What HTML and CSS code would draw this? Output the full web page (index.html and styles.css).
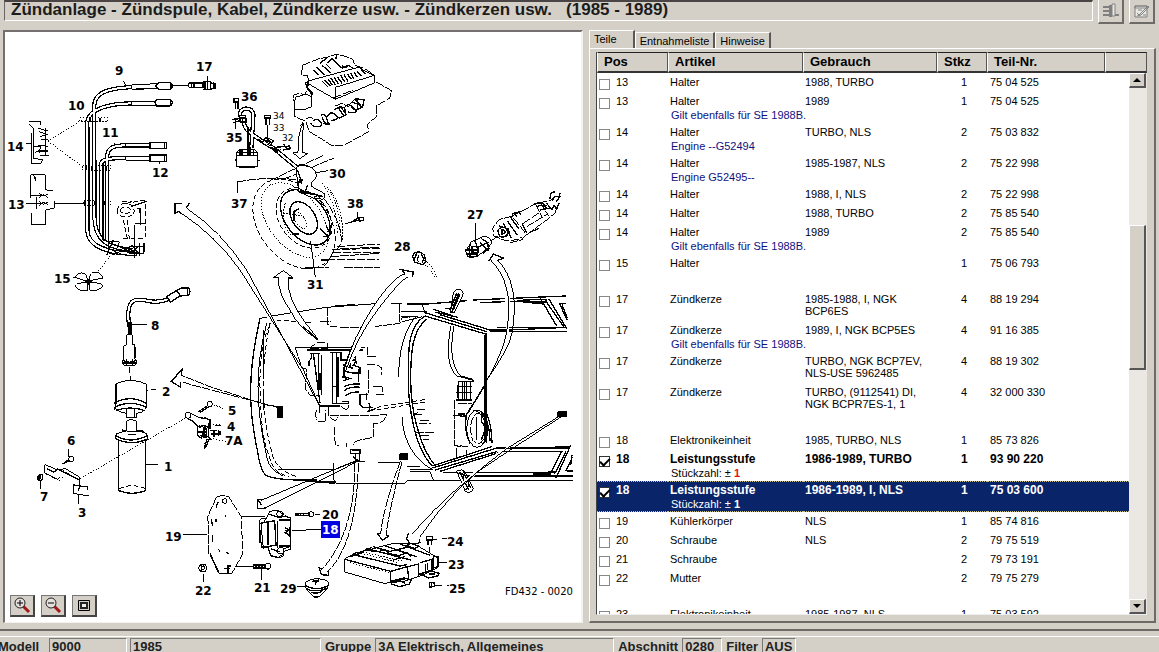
FILE: index.html
```
<!DOCTYPE html>
<html lang="de">
<head>
<meta charset="utf-8">
<title>Zündanlage</title>
<link rel="stylesheet" href="styles.css">
</head>
<body>
<div class="app">
  <header class="toolbar">
    <h1 class="title">Zündanlage - Zündspule, Kabel, Zündkerze usw. - Zündkerzen usw.&nbsp;&nbsp; (1985 - 1989)</h1>
    <button class="tool" aria-label="Export">
      <svg width="18" height="16" viewBox="0 0 18 16"><path d="M1 4h7M1 8h7M1 12h7M13 12h4" stroke="#808080" stroke-width="2"/><path d="M7 2h3v12H7z" fill="#808080"/><path d="M10 1h3v12h-3z" fill="#e8e8e4" stroke="#808080"/></svg>
    </button>
    <button class="tool" aria-label="Notiz">
      <svg width="16" height="16" viewBox="0 0 16 16"><path d="M1 3h12v11H1z" fill="#e8e8e4" stroke="#808080"/><path d="M1 3h12v2H1zM4 7h4M3 10l2 2 9-9 1 1-8 8-4 1M9 12h3" fill="none" stroke="#808080"/></svg>
    </button>
  </header>

  <main class="work">
    <section class="diagram">
      <svg class="drawing" viewBox="5 32 576 590" preserveAspectRatio="xMidYMid meet" role="img" aria-label="Explosionszeichnung">
        <!-- Ignition cables 9-12 with brackets 13-15 -->
        <g class="ink" transform="scale(.33333)">
          <g class="cable-o"><path d="M283 660V315C284 272 340 264 400 261"/><path d="M262 690V365C268 325 330 311 395 310"/><path d="M321 720V470C323 440 345 436 380 436"/><path d="M303 700V495C303 475 330 474 380 475"/><path d="M262 690C264 745 330 760 410 762"/><path d="M283 650C285 720 320 745 400 750"/></g>
          <g class="cable-i"><path d="M283 660V315C284 272 340 264 400 261"/><path d="M262 690V365C268 325 330 311 395 310"/><path d="M321 720V470C323 440 345 436 380 436"/><path d="M303 700V495C303 475 330 474 380 475"/><path d="M262 690C264 745 330 760 410 762"/><path d="M283 650C285 720 320 745 400 750"/></g>
          <path class="b" d="M268 380V690M290 480V650M309 490V720M325 500V730"/>
          <path fill="#fff" d="M395 255l75-4v14l-75 3zM395 304h75v13h-75zM378 430h70v11h-70zM378 470h70v11h-70z"/>
          <path class="b" d="M395 268l75-3M395 317h75M378 441h70M378 481h70"/>
          <path class="b" fill="#fff" d="M475 248h35q7 4 7 10t-7 10h-35l-8-10zM470 298h40q7 4 7 10t-7 10h-40l-5-10zM450 427h49v18h-49zM450 465h49v19h-49z"/>
          <path class="b" d="M512 250v16M512 300v16M494 428v16M494 466v17"/>
          <path d="M518 257h45M370 242l8 15M345 428v10M478 485v8M622 228v20"/>
          <path class="b" d="M563 257l6-8h40v14h-40zM575 250v12M582 250v12M609 244h22v24h-22M615 244v24M622 244v24M631 248l14 4v12l-14 4M640 246v20"/>
          <path class="d1" d="M240 353h84v11h-84zM248 498h84v13h-84zM252 602h80v14h-80zM143 423L245 360M143 423L248 500"/>
          <path class="b" d="M270 353v11M300 353v11M258 498v13M275 498v13M318 498v13M255 602v14M285 602v14M315 602v14"/>
          <path d="M78 430h16M94 400v90h30l4-12-28-2M88 366h34v10M88 372l12 12v90M100 440h24l-8 12h28M115 385l28 8M118 395l22 8M120 410l24-8M124 420h20M115 435l28 4M118 455h26M120 466h26M104 460l10-8 8 8M136 384v80"/>
          <path d="M78 610h45M92 524h44v45l24 4M92 524v70M92 586h30M95 640v34M100 524l8 20v-14M110 592v34M118 580l12 8 14-6M118 592l12-8 14 8M118 604l12 10 14-8M118 616l12-10 14 8M95 674h42v-44l26-6v-20M163 610h89"/>
          <path d="M330 768L292 818" class="d1"/>
          <path fill="#fff" d="M262 836C258 812 232 816 226 832l34 12zM268 842C266 812 300 806 308 834zM262 848c-30 0-38 6-34 14q10 12 34 10zM270 848c35 0 42 6 34 16q-14 12-34 6z"/>
          <path class="b" d="M256 846h20M264 838v16"/><path d="M219 832h10"/>
          <path class="d2" d="M352 630q4-20 25-20t25 20-25 20-25-20M362 630q4-10 15-10t14 10-14 10-15-10M378 610l60-10M367 606h30M370 660l12 55M382 660l6 56M436 612v100M405 670h32M370 716h66"/>
          <path class="b" d="M392 620l48-16M412 625h8l2 50M408 670h24M403 675v100M340 720l-20 45M345 735l60 18M350 748l60 14M388 740h42v20h-42zM418 728v40M395 735l20 25M414 738l-20 22M432 730v26"/>
          <path d="M326 725h32l-14 40-18-6zM305 718l80 34M300 735l70 30"/>
        </g>
        <!-- Coil cable 8, cap 2 -->
        <g class="ink" transform="translate(0 180) scale(.33333)">
          <path class="cable-o" d="M388 440C374 350 410 355 440 362S490 365 510 355"/><path class="cable-i" d="M388 440C374 350 410 355 440 362S490 365 510 355"/>
          <path fill="#fff" class="b" d="M500 350l32-20 12-6h22l4 10-4 12-26 2-28 18z"/><path class="b" d="M562 325v20M530 332l12 16"/>
          <path class="b" d="M390 425v38M395 425v38M386 425v38"/><path d="M392 434h48"/>
          <path fill="#fff" d="M380 464h17v30h7v42l8 14-10 6H372l-6-10 6-10v-38l8-4z"/>
          <path class="b" d="M397 466v26M405 500v35M368 540q20 14 42 0M368 549h42M380 536v18M398 536v18"/><path d="M388 560v18M391 588v16M437 631h8M452 630h16"/>
          <path fill="#fff" d="M347 612q44-22 92 0v68q-4 18-30 20v14h-28v-14q-28-2-36-18l3-14z"/>
          <path class="b" d="M348 612v52M439 614v54M343 670q46-28 97 0M343 682q46-24 97 0M347 692q44-16 88 0M380 684v30M404 684v30M348 670l-4 20"/>
        </g>
        <!-- Coil 1, brackets 3-7, heat sink 19, power stage 18 -->
        <g class="ink" transform="translate(0 370) scale(.33333)">
          <path fill="#fff" d="M379 182v-28q14-10 31 0v28l30 8 4 18-8 4v150q-40 16-79 0V212l-10-6 2-14z"/>
          <path class="b" d="M346 196q46 28 97 0M347 206q48 24 97 0M366 180l12 6M436 220v140M410 184q12-8 22 4M380 184h30M385 194h24"/>
          <path class="d2" d="M358 356q38-18 78 0"/><path class="b" d="M357 362q38 16 80 0M438 284h36"/>
          <path class="d1" d="M240 326L560 142M660 165h-20M670 115l-32-12M678 214l-40-8"/>
          <path d="M663 167h-18M206 238v22M122 330v26M237 376v26M550 493h72M725 439h65M690 591h70M784 598v32M610 612v24M876 482h24"/>
          <circle cx="564" cy="136" r="9"/><circle cx="629" cy="102" r="8"/>
          <path class="b" d="M594 126l30-20M600 128l26-18M572 130l24 12q12 4 20 2l14 6v24l-18-8-14 6-20-18-16-8M600 166l-8 6v24l12 8 10-30M604 166q20 0 14 30l18 14M592 186h26M600 196l20 6M612 172v32M626 158v46M630 182h20M634 192h26v-10M642 180v20M656 180v18M622 206l-10 30M618 218l-6 4M628 206l-12 28"/>
          <circle cx="214" cy="267" r="8"/><path d="M134 284v24l24 12 14 8 8-6M134 284l16 6 20 10 26-4 44 26v26l-20-4v26l46 8M264 360v-12l-24 2" /><path class="b" d="M188 282l20-10M196 274l10-4M140 296l20 10 14-8M238 326v22M218 346h24l-8 16M172 296l66 34"/><path class="d1" d="M138 312l40 20 14-12"/>
          <path class="b" d="M114 318q6-8 14-2v12q-8 6-14 0zM120 316v12"/>
          <path fill="#fff" class="d3" d="M650 380l22-4 14 4 38 60 2 55 3 56-34 60h-34l-34-60V495l-4-55z"/>
          <circle cx="674" cy="393" r="7"/><path class="b" d="M634 448l4 20M638 494v22M648 446v10M656 538l4 8M680 545l6 8M654 396l-6 16M674 438h5M630 550l26 60M684 586v26M672 596h18M682 588h10"/>
          <path fill="#fff" d="M806 444l10-22q14-4 30 4l8 10 18 10v92l-20 6-2 14-14 6-24-6-8-24-20-6-6-72 4-10z"/>
          <path class="b" d="M784 462l40-6 2 72-36 6M804 460v66M834 454v78M838 456l30-2M838 530l30 2M872 450v80M778 462v24h8M780 490v30M812 430l24 8 12-6M836 444h18M810 540l30 8M852 478l14 8-10 8 10 6M866 476v26M854 486h14"/><circle cx="842" cy="545" r="9"/><circle cx="840" cy="433" r="9"/>
          <circle cx="608" cy="594" r="12"/><circle cx="608" cy="594" r="5"/><path class="b" d="M596 590l12-6 8 8M600 600l8 4"/>
          <path class="b" d="M760 585h34v10h-34zM768 585v10M776 585v10M784 585v10"/><circle cx="803" cy="589" r="9"/>
          <path class="d1" d="M190 300L230 326"/>
        </g>
        <!-- Engine, hub assembly, sensors -->
        <g class="ink" transform="translate(220 30) scale(.33333)">
          <path fill="#fff" class="d3" d="M247 106l50-20 32-6 20-8 22 6 26 8 8 20 26 8 34 22v18l50 28-6 22-40 24 2 30-30 26 6 20-24 14-56 30-30 0-30-20-40-24-10-30-32-14-4-64 14-6 20 4 12-36-4-20-18-4z"/>
          <path d="M260 154L415 112l50 26v20L346 208 256 156M346 208v-36l118-36M262 156v20l14 20v32M222 240l4-38 34-10 14 8v30l-24 10z"/>
          <path class="b" d="M256 156l4 16 16 16-2 30M305 152l20 20M314 150l18 18M324 148l14 18M332 144l14 20M342 142l14 20M352 140l14 20M362 136l12 20M372 134l12 20M382 132l12 16M392 130l10 16M402 126l10 16M412 124l12 14M422 118l16 14M280 120l16 14M290 112l24 22M306 106l28 24M318 102l14 14"/>
          <path class="b" d="M320 100l16-14 30 28 20-8 14 10M350 72l-2 14M366 106q6 12 18 2M300 100l20-16"/>
          <path class="d3" d="M258 268q10-12 22 0M346 228l18-8 24 12M250 276l-8 12M340 204l60-24"/>
          <path class="b" d="M280 272q14-10 22 4t-10 14-20-12M302 256q14-8 18 8t8 18-18-2M320 262q10-20 24-10t8 14-20 6M342 240l18-10 14 4 4 20-20 10-18-14M374 232q10-16 28 2t-18 12M390 222l16-16 26 4-4 22-22 8-12-8M404 206l20 24M412 204v30M356 234l14 22M362 230l14 20M306 262l12 22M392 216l30 8"/>
          <path fill="#fff" d="M252 278q-6 30-4 90l16 2-24 16-22-18 16-2q-2-60 18-88z"/>
          <path class="b" d="M42 206h14v10H42zM46 216v20M54 216v20M134 256h18v8h-18zM138 264v20M148 264v20M36 268l24-2M40 278l20-6"/><path d="M48 270v26M143 284v44M52 490v-34M288 428l36-6M412 546v18M766 578v54M374 582l20-6"/>
          <path class="cable-o" d="M62 260C50 230 105 225 100 260L94 354M74 262C60 300 110 320 124 332L160 354 235 416"/>
          <path class="cable-i" d="M62 260C50 230 105 225 100 260L94 354M74 262C60 300 110 320 124 332L160 354 235 416"/>
          <path class="b" d="M56 256h20l4 20H62zM58 264h20M84 290v64M116 326l10 12 12-16 14 14-10 8M140 322l20 10-10 16M134 330l24 8M152 350l22 20M168 352l40-4 4 8-24 4M190 342l14 18M160 348l12 16 12-6"/>
          <path fill="#fff" d="M50 368l8-10h46l8 10v42q-30 8-62 0z"/><path class="b" d="M52 368h58M48 376h66M60 358v18M66 358v18M84 352v24M90 352v24M100 356v20M50 410h60M44 390h6M112 392h8M56 410h44"/>
          <path class="d3" d="M52 456Q140 438 238 450M150 452L310 376M190 448L342 384M238 450q80 40 112 120t-10 92q-10 30-30 48"/>
          <ellipse class="d2" cx="222" cy="582" rx="104" ry="150" transform="rotate(-38 222 582)"/>
          <ellipse class="d1" cx="224" cy="570" rx="78" ry="128" transform="rotate(-38 224 570)"/>
          <ellipse class="b" cx="256" cy="562" rx="60" ry="94" transform="rotate(-38 256 562)"/>
          <ellipse class="d2" cx="252" cy="564" rx="72" ry="100" transform="rotate(-38 252 564)"/>
          <ellipse class="b" cx="251" cy="564" rx="34" ry="54" transform="rotate(-34 251 564)"/>
          <ellipse class="d1" cx="240" cy="570" rx="14" ry="30" transform="rotate(-34 240 570)"/>
          <path class="d1" d="M190 550l60 8M196 520q-20 60 20 100M306 460q44 60 46 150M320 470q44 60 40 150M330 480q44 60 36 150"/>
          <path class="b" d="M300 596l24 24M310 620h18M216 612h22M318 588l14 24M236 536l-14 8v30"/>
          <path fill="#fff" d="M228 412q20-12 40-2 24 10 20 34l-12 12v14l36 20q6 12-2 18l-30-4-44-18z"/>
          <path class="b" d="M230 408q20-8 34 2M232 420l12 34h-8v20l22 16 30 4M236 450h14M240 446v14M240 480l70 20M262 466l-8 26M282 504q10-14 18 0M238 486h30M236 454l10 6"/><path d="M272 634l14 108"/>
          <path class="d3" d="M350 650l130-8M335 660l145-6M338 668h142M330 680l148-10M320 690h158M256 714h70M372 712h108M360 656l120-4" stroke-dasharray="14 6"/>
          <path class="b" d="M394 576l22-6M398 572l20-8M416 562h14v8l-12 4zM304 690l20 0M250 716h30"/>
          <path fill="#fff" d="M736 664l18-28 34-16q26-2 26 20l-10 14-30 24-26 6z"/>
          <path class="b" d="M736 660h40M738 672h36M752 640q-8 20 0 44M764 632q14 30 6 46M744 654l26 18M742 680h30M780 638l24 24M784 626q26 10 20 36M776 650l30-14M790 670l18-16M756 650h18v18h-18z"/>
          <path class="d3" d="M814 632l22-16M856 564l20-6 44 56-14 14-50 4-34-14-4-24 20-26zM876 558l70-36 54-14M920 614l60-44 26-22 6-20M946 522l20 40M960 518l26 40M900 620l10 8-40 10M920 590l60-36M910 580l50-34"/>
          <path class="b" d="M834 600q10-14 26-4t-4 22-22-18M842 602q6-6 12 0t-4 10M838 588l26 8-4 26M850 580l24 44M862 572l30 44M872 562l24 34M876 552l28-8M884 546l6 14M896 542l6 12M940 524q20-12 40 4M950 530q20-10 32 6M960 540l30-6M980 520l16 20 6-14 8 12 8-20M990 506q0-22 14-20M996 514q6-20 26-14M1020 488l-2 14-10 14M926 608l30-12M906 580l14 28M846 598v18"/>
          <path class="b" d="M578 680q4-16 22-14l12 8 6 20-10 10-24-8zM590 670l-8 20M596 676q-6 14 0 20M602 674q14 8 4 24"/><path class="d1" d="M612 690q30 20 38 52M606 698q30 20 38 46"/>
        </g>
        <!-- Vehicle, top view -->
        <g class="ink" transform="translate(240 270) scale(.33333)">
          <path class="b" d="M60 145Q34 260 32 350T52 540Q60 600 78 616 100 628 170 630L285 640"/>
          <path d="M60 145q40-8 90-16L260 112 420 100h60"/><path class="b" d="M420 100h66M285 108l60-4M500 102h60l120-10M170 630h60M230 636h55M500 632h500M700 90l278-12M720 98l150-6"/>
          <path d="M80 160Q54 260 54 350T80 560q6 40 50 58M72 180v140M72 360l-2 60"/><path class="d2" d="M90 160Q70 250 70 350T96 550q10 50 80 72M100 150Q58 200 60 350T88 560q10 50 60 60M110 150l110 8"/>
          <path class="d3" d="M240 154h32M300 172h80M400 170l80-10 6-16 50-6M262 112v50l10 8h20M480 102v54"/><path d="M115 598h170M282 580v50q4 12 20 12h190l10-10M345 576h30M415 578h64M482 125h80M482 140h40"/>
          <path class="b" d="M165 232h210M200 240h170M215 250v14l-8 10v14M220 250l20 150M235 250v130M245 255v120M278 250v150M290 250v150M303 250v24M210 250h30M270 248h36M275 400h48M240 408h60M278 350h10M294 260v120M240 310v50"/>
          <path class="d3" d="M165 232l20 60 14 6-2 60 16 20h24M382 230v30h30M380 284h30l16 10v20M386 300v70M400 350h28v16M408 374h24M230 420q-10 20 6 34h22v-34M266 412q-8 30 20 40l10-12M302 408q20 20 24 0M306 395h20v20M270 436h140l30-4q-6 30-40 30v40l-40 8q-20 4-20 14M282 470l4 56h12M320 520v10"/>
          <path class="b" d="M310 300q20 12 48 8M310 318q14 6 20 8l-20 6M312 350q20-10 48-8M312 362q20-14 48-10M316 376q20-12 40-10M305 270h40l6 12M330 262v30M356 296v40M310 284q14 10 30 10M360 374v30l10 8h30M340 240l8 34-10 14M358 374h26M380 370v20M385 398q10 12 0 26l22-8M340 285l20 8v20"/>
          <path class="d2" d="M410 412Q480 400 560 388M410 420Q500 404 560 396"/><path class="d3" d="M530 420h30M520 434h30M540 452h30M536 460h36M525 488h60M540 496h26M550 508h18M515 440l20-14"/>
          <!-- windscreen -->
          <path class="b" d="M555 138C500 170 505 250 505 330S525 540 578 588M560 148C516 180 512 250 512 330S535 530 588 590"/>
          <path d="M530 138C490 180 476 250 476 320M486 440C490 520 530 575 580 600"/>
          <path class="b" d="M555 128L740 185M555 138L740 193M600 134l150 46h60L980 172M770 172h180M740 190V520M735 195V515M750 185h230M578 588L755 530M585 600L770 545M600 604l190-60h180M578 594L770 534h220M740 430q16 40 16 90"/>
          <path d="M545 100l10 28M486 155l60-15M510 605h60l10 25M500 590h40M510 598h70"/>
          <path class="b" d="M978 80h-80l52 88M915 90l56 80M926 86l54 90M978 100h-20l24 50M966 104l16 40M850 88h70v8h-70zM870 98l40 4M994 530h-50M965 545l-30 58M978 545l-34 66M992 526l-44 98M610 608h260l75-2M660 618h340M880 612h50v8h-50zM980 604h20M998 560l-20 42h20M996 555l-4 30"/>
          <path fill="#fff" d="M636 100q0-40 18-42 20 2 14 20l-26 50-12-2z"/><path class="b" d="M580 118l60 20M650 70l-20 50M660 74l-24 52M615 116h30M584 126l70 16M640 110l16-40"/>
          <path fill="#fff" d="M650 604q16-10 26 4l24 48q-8 18-24 8z"/><path class="b" d="M660 606l26 54M670 604l22 50M654 612q20-10 16 20M686 646l-8 14"/>
          <path d="M632 168q-20 120 20 150l50 14M642 168q-20 110 20 150l38 10"/>
          <path class="b" d="M655 334h48M650 350h46M648 368h48M656 334v52M668 334v52M680 334v52M692 336v56M648 390h48M652 344v40M674 336v50"/>
          <path class="d3" d="M645 390v136l40 4M655 400h40M650 535v30M680 540v20M640 436h40M642 526l20 4M700 420l20 8M660 440h20M655 430h20"/>
          <ellipse cx="712" cy="476" rx="32" ry="56"/><ellipse class="d3" cx="714" cy="476" rx="22" ry="46"/><path class="b" d="M680 430q-10 50 10 90M724 430l14 12v30l-14-16zM724 510l14-40v40l-10 12M710 440v70M722 424q30 40 28 90"/>
          <path class="b" d="M332 538h28v12h-28zM346 548v24h12v-22M340 560l16 14M336 542h22"/>
          <path class="fill" d="M114 409h14v34h-14zM480 552h24v18h-24zM953 426h28v14h-28z"/>
        </g>
        <!-- Pointer arrows -->
        <g class="ink" transform="translate(240 270) scale(.33333)">
          <path fill="#fff" stroke="none" d="M-160-185Q-60-120 20 0L240 410 236 400 0 0Q-70-100-178-172z"/>
          <path d="M-160-185Q-60-120 20 0L240 410V430M-178-172Q-70-100 0 0L190 300 240 410"/><path class="b" d="M-197-168v-32h24M-152-200l-10 14M-197-168l12-8 8 6M-195-198l2 26"/>
          <path fill="#fff" d="M115 22h-14L130 2l30 22h-16Q140 80 190 150L234 208Q180 180 150 120 114 70 115 22z"/><path class="b" d="M190 170l44 40M100 22h14M145 24h14"/><path class="d3" d="M210 240q10-30 52-20v20M212 236h50"/>
          <path fill="#fff" d="M312 300Q340 200 400 110T495 12M318 300Q350 200 420 110T505 22"/><path class="b" d="M478-2l10 2 32 6-2 14M495 12l-8-10M312 322v-30l24-62M320 325l-14-4"/>
          <path fill="#fff" stroke="none" d="M764-30C850 80 810 240 740 340L790 230Q820 80 748-32z"/>
          <path d="M752-30q70 70 50 200-4 80-120 258M772-30q70 70 44 220-10 50-80 145"/><path class="b" d="M738 340l-56 92M752-30l-4-2-2 6 14-22 30 12-18 8M655 434h20"/>
          <path class="d3" d="M114 412L-40 372-178 336M90 408L-90 350-176 316"/><path class="b" d="M-178 352v-16M-176 316l2-18-32 36 28 18M100 408l14 4"/>
          <path fill="#fff" d="M344 574L280 600 66 690M352 574L280 612 78 712"/><path class="b" d="M66 690l-12-2-2 28 26-2M54 690l10 14M290 596l50-20"/>
          <path fill="#fff" stroke="none" d="M953 440L790 545Q650 650 540 800l-22-6Q640 650 770 550z"/>
          <path d="M956 440L800 536Q640 650 540 800M970 436L780 560Q650 640 516 792"/>
        </g>
        <!-- Lower components -->
        <g class="ink" transform="translate(240 440) scale(.33333)">
          <path class="b" d="M506 278l-6 18 12 18 28-6-2-10M420 280l-8 2 16 18 18-12-8-4M246 388l-8-4 6 20 22 2-2-14"/>
          <path class="d3" d="M345 70Q344 280 246 388M355 70Q350 310 264 394M482 62Q430 200 422 282M486 66Q450 200 438 284"/>
          <path d="M14 229h60M155 271l90-2M0 379h40M66 388v32M224 223h16M580 298h12M606 296h16M570 320v74M586 436h20M622 438h4M594 368h28M172 440h22"/>
          <path class="b" d="M168 221h40v6h-40zM174 218v8M182 218v8M190 218v8"/><circle cx="213" cy="223" r="8"/>
          <path fill="#fff" d="M80 234l10-20q14-6 30 2l10 12 22 6v84l-20 8-4 18-14 8-22-6-8-24-16-6-4-60z"/>
          <path class="b" d="M60 250l44-8 4 74-44 6M84 246v70M112 244v80M116 240h34M116 318h34M152 236v82M134 262l14 8-12 8 12 8M148 260v30M136 272h14M88 222l26 10 16-6M58 256v18h6M92 326l26 10"/><circle cx="122" cy="332" r="10"/><circle cx="120" cy="223" r="10"/>
          <path class="b" d="M40 374h34v10H40zM50 374v10M58 374v10M66 374v10"/><circle cx="84" cy="378" r="9"/>
          <path fill="#fff" d="M196 434q0-16 34-18 36 2 36 16l-4 14-24 24-14 2-20-18q-8-8-8-20z"/><path class="b" d="M198 438q30 16 66 0M198 446q30 14 66-2M214 456q14 8 32-2M222 468q8 6 16 0M216 424l20-4M226 420v14M238 422l-12 6"/>
          <path fill="#fff" d="M314 356l30-16 110-28h70l60 36 8 6v30l-40 20-60 20-60 6-118-34z"/>
          <path class="b" d="M314 358l138 36v30M452 394l50-14 4 34-48 12M340 344l140 34 22-4M382 326l130 34M400 320l50 14 60-14M430 316l100 34M480 312l90 34M505 380l30-8v38M540 368l36-10v36M538 402l36-10M330 350l36-12 16-14M395 322l-14 8 28 6M440 340l28 10 34-12 10 12M460 360l34-10M580 348v36l14-4v-30zM500 316l24 10 12-8-24-8zM452 424l40-10 22 6-6 12-30 8-24-8zM540 402l30-10 28 8-6 8-26 6zM482 424l14 6M566 402h18M556 372v20M562 370v20M420 330q20-2 26 10l34 8"/>
          <path class="d1" d="M326 362l124 30M346 336l130 32M360 334l130 30M330 368l120 30"/><path class="b" d="M560 290h18v10h-18zM564 300v16M574 300v14M568 428h14l2 10-14 4zM574 430v10"/>
        </g>
        <g class="num">
          <text x="115" y="75">9</text><text x="196" y="71">17</text><text x="68" y="110">10</text><text x="102" y="137">11</text><text x="152" y="177">12</text><text x="7" y="151">14</text><text x="8" y="209">13</text><text x="54" y="283">15</text>
          <text x="241" y="101">36</text><text x="226" y="142">35</text><text x="231" y="208">37</text><text x="329" y="178">30</text><text x="347" y="208">38</text><text x="307" y="289">31</text><text x="467" y="219">27</text><text x="394" y="251">28</text>
          <text x="151" y="330">8</text><text x="162" y="396">2</text><text x="228" y="415">5</text><text x="227" y="431">4</text><text x="225" y="445">7A</text><text x="67" y="445">6</text><text x="164" y="471">1</text><text x="40" y="501">7</text><text x="78" y="517">3</text>
          <text x="165" y="541">19</text><text x="195" y="595">22</text><text x="254" y="592">21</text><text x="280" y="593">29</text><text x="322" y="519">20</text><text x="447" y="546">24</text><text x="448" y="569">23</text><text x="449" y="593">25</text>
        </g>
        <g class="num-s"><text x="273" y="119">34</text><text x="273" y="131">33</text><text x="282" y="141">32</text></g>
        <rect x="321" y="521" width="19" height="17" fill="#0000e0"/>
        <text class="num-on" x="322" y="534">18</text>
        <text class="plate" x="505" y="595">FD432 - 0020</text>
      </svg>
      <div class="zoom-tools">
        <button class="zoom" aria-label="Vergrößern"><svg width="20" height="17" viewBox="0 0 20 17"><path d="M11 9l6 6" stroke="#a01818" stroke-width="3"/><circle cx="8" cy="6" r="5" fill="#e4e0dc" stroke="#222"/><path d="M5 6h6M8 3v6" stroke="#000"/></svg></button>
        <button class="zoom" aria-label="Verkleinern"><svg width="20" height="17" viewBox="0 0 20 17"><path d="M11 9l6 6" stroke="#a01818" stroke-width="3"/><circle cx="8" cy="6" r="5" fill="#e4e0dc" stroke="#222"/><path d="M5 6h6" stroke="#000"/></svg></button>
        <button class="zoom" aria-label="Einpassen"><svg width="20" height="17" viewBox="0 0 20 17"><path d="M4.500 3.500h11v10h-11z" fill="none" stroke="#000"/><path d="M7 6h6v5H7z" fill="#eee" stroke="#222" stroke-width="2"/></svg></button>
      </div>
    </section>

    <section class="parts">
      <nav class="tabs">
        <button class="tab tab-on">Teile</button>
        <button class="tab">Entnahmeliste</button>
        <button class="tab">Hinweise</button>
      </nav>
      <div class="page">
        <div class="list">
          <table>
            <colgroup><col class="w-pos"><col class="w-art"><col class="w-use"><col class="w-qty"><col class="w-num"><col></colgroup>
            <thead><tr><th>Pos</th><th>Artikel</th><th>Gebrauch</th><th>Stkz</th><th>Teil-Nr.</th><th></th></tr></thead>
            <tbody>
              <tr><td><label><input type="checkbox">13</label></td><td>Halter</td><td>1988, TURBO</td><td>1</td><td>75 04 525</td><td></td></tr>
              <tr class="two"><td><label><input type="checkbox">13</label></td><td>Halter<div class="note">Gilt ebenfalls für SE 1988B.</div></td><td>1989</td><td>1</td><td>75 04 525</td><td></td></tr>
              <tr class="two"><td><label><input type="checkbox">14</label></td><td>Halter<div class="note">Engine --G52494</div></td><td>TURBO, NLS</td><td>2</td><td>75 03 832</td><td></td></tr>
              <tr class="two"><td><label><input type="checkbox">14</label></td><td>Halter<div class="note">Engine G52495--</div></td><td>1985-1987, NLS</td><td>2</td><td>75 22 998</td><td></td></tr>
              <tr><td><label><input type="checkbox">14</label></td><td>Halter</td><td>1988, I, NLS</td><td>2</td><td>75 22 998</td><td></td></tr>
              <tr><td><label><input type="checkbox">14</label></td><td>Halter</td><td>1988, TURBO</td><td>2</td><td>75 85 540</td><td></td></tr>
              <tr class="two"><td><label><input type="checkbox">14</label></td><td>Halter<div class="note">Gilt ebenfalls für SE 1988B.</div></td><td>1989</td><td>2</td><td>75 85 540</td><td></td></tr>
              <tr><td><label><input type="checkbox">15</label></td><td>Halter</td><td></td><td>1</td><td>75 06 793</td><td></td></tr>
              <tr class="gap"><td colspan="6"></td></tr>
              <tr class="two"><td><label><input type="checkbox">17</label></td><td>Zündkerze</td><td>1985-1988, I, NGK<br>BCP6ES</td><td>4</td><td>88 19 294</td><td></td></tr>
              <tr class="two"><td><label><input type="checkbox">17</label></td><td>Zündkerze<div class="note">Gilt ebenfalls für SE 1988B.</div></td><td>1989, I, NGK BCP5ES</td><td>4</td><td>91 16 385</td><td></td></tr>
              <tr class="two"><td><label><input type="checkbox">17</label></td><td>Zündkerze</td><td>TURBO, NGK BCP7EV,<br>NLS-USE 5962485</td><td>4</td><td>88 19 302</td><td></td></tr>
              <tr class="two"><td><label><input type="checkbox">17</label></td><td>Zündkerze</td><td>TURBO, (9112541) DI,<br>NGK BCPR7ES-1, 1</td><td>4</td><td>32 000 330</td><td></td></tr>
              <tr class="gap"><td colspan="6"></td></tr>
              <tr><td><label><input type="checkbox">18</label></td><td>Elektronikeinheit</td><td>1985, TURBO, NLS</td><td>1</td><td>85 73 826</td><td></td></tr>
              <tr class="two strong"><td><label><input type="checkbox" checked>18</label></td><td>Leistungsstufe<div class="note plain">Stückzahl: ± <b class="red">1</b></div></td><td>1986-1989, TURBO</td><td>1</td><td>93 90 220</td><td></td></tr>
              <tr class="two strong selected"><td><label><input type="checkbox" checked>18</label></td><td>Leistungsstufe<div class="note plain">Stückzahl: ± <b>1</b></div></td><td>1986-1989, I, NLS</td><td>1</td><td>75 03 600</td><td></td></tr>
              <tr><td><label><input type="checkbox">19</label></td><td>Kühlerkörper</td><td>NLS</td><td>1</td><td>85 74 816</td><td></td></tr>
              <tr><td><label><input type="checkbox">20</label></td><td>Schraube</td><td>NLS</td><td>2</td><td>79 75 519</td><td></td></tr>
              <tr><td><label><input type="checkbox">21</label></td><td>Schraube</td><td></td><td>2</td><td>79 73 191</td><td></td></tr>
              <tr><td><label><input type="checkbox">22</label></td><td>Mutter</td><td></td><td>2</td><td>79 75 279</td><td></td></tr>
              <tr class="gap"><td colspan="6"></td></tr>
              <tr><td><label><input type="checkbox">23</label></td><td>Elektronikeinheit</td><td>1985-1987, NLS</td><td>1</td><td>75 03 592</td><td></td></tr>
            </tbody>
          </table>
          <div class="scroll">
            <button class="step" aria-label="Nach oben"><svg width="8" height="4" viewBox="0 0 8 4"><path d="M0 4l4-4 4 4z"/></svg></button>
            <div class="track"><div class="thumb"></div></div>
            <button class="step" aria-label="Nach unten"><svg width="8" height="4" viewBox="0 0 8 4"><path d="M0 0l4 4 4-4z"/></svg></button>
          </div>
        </div>
      </div>
    </section>
  </main>

  <footer class="status">
    <span class="key model">Modell</span><span class="val v-model">9000</span><span class="val v-year">1985</span>
    <span class="key">Gruppe</span><span class="val v-group">3A Elektrisch, Allgemeines</span>
    <span class="key">Abschnitt</span><span class="val v-part">0280</span>
    <span class="key">Filter</span><span class="val v-filter">AUS</span>
  </footer>
</div>
</body>
</html>
```
FILE: styles.css
```
* { box-sizing: border-box; }
body { margin: 0; background: #d4d0c8; color: #000; font: 11px/12px "Liberation Sans", Arial, sans-serif; }
button { padding: 0; font: inherit; color: inherit; background: #d4d0c8; }
.app { height: 100vh; display: flex; flex-direction: column; overflow: hidden; }

.toolbar { display: flex; gap: 5px; height: 30px; padding: 0 4px; flex: none; }
.title { flex: 1; height: 21px; margin: 0; padding: 0 6px; border: 1px solid #fff; border-top: 2px solid #4a4444; border-left-color: #6a6666; font-size: 17px; line-height: 16px; font-weight: bold; color: #1c1c1c; white-space: nowrap; overflow: hidden; }
.tool { width: 26px; height: 24px; border: 1px solid #fff; border-top: 0; border-right: 2px solid #6e6a66; border-bottom: 2px solid #6e6a66; display: grid; place-items: center; }

.work { flex: 1; min-height: 0; display: grid; grid-template-columns: 580fr 567fr; gap: 6px; padding: 0 3px; }
.diagram { position: relative; min-height: 0; background: #fff; border: 1px solid #f4f2ee; border-right-width: 2px; border-top: 2px solid #747070; border-left: 2px solid #747070; }
.drawing { display: block; width: 100%; height: 100%; }
.ink { fill: none; stroke: #000; stroke-width: 3; shape-rendering: crispEdges; }
.b { stroke-width: 4; }
.d1 { stroke-dasharray: 4 5; }
.d2 { stroke-dasharray: 14 8; }
.d3 { stroke-dasharray: 26 4; }
.cable-o { stroke-width: 13; }
.cable-i { stroke: #fff; stroke-width: 6; }
.fill { fill: #000; }
.num { font: bold 12px "DejaVu Sans", Verdana, sans-serif; }
.num-s { font: 9px "DejaVu Sans", Verdana, sans-serif; }
.num-on { font: bold 12px "DejaVu Sans", Verdana, sans-serif; fill: #fff; }
.plate { font: 10px "DejaVu Sans", Verdana, sans-serif; }
.zoom-tools { position: absolute; left: 5px; bottom: 5px; display: flex; gap: 6px; }
.zoom { width: 25px; height: 22px; border: 1px solid #777; border-right: 2px solid #444; border-bottom: 2px solid #444; display: grid; place-items: center; }

.parts { display: flex; flex-direction: column; min-width: 0; min-height: 0; }
.tabs { display: flex; align-items: flex-end; height: 18px; flex: none; }
.tab { height: 16px; padding: 0 4px; border: 0; border-top: 1px solid #fff; border-left: 1px solid #fff; border-right: 2px solid #5c5858; }
.tab-on { height: 18px; padding: 0 16px 2px 4px; }
.page { flex: 1; min-height: 0; padding: 3px 7px 6px 6px; border: 1px solid #fff; border-right: 2px solid #6e6a66; border-bottom: 2px solid #6e6a66; }
.list { position: relative; height: 100%; overflow: hidden; background: #fff; border-left: 1px solid #444; border-bottom: 1px solid #eee; }
table { width: 100%; table-layout: fixed; border-collapse: separate; border-spacing: 0; }
.w-pos { width: 71px; }
.w-art { width: 135px; }
.w-use { width: 134px; }
.w-qty { width: 50px; }
.w-num { width: 118px; }
th { height: 21px; padding: 0 6px; background: #d4d0c8; border-top: 1px solid #222; border-bottom: 2px solid #333; border-right: 1px solid #555; border-left: 1px solid #fff; font-size: 13px; line-height: 18px; text-align: left; }
tbody tr { height: 19px; }
tbody .two { height: 31px; }
tbody .gap { height: 17px; }
td { padding: 3px 0 0 2px; vertical-align: top; white-space: nowrap; overflow: visible; }
td:nth-child(4) { padding-left: 24px; }
td:nth-child(5) { padding-left: 3px; }
.gap td { padding: 0; }
label { display: flex; gap: 6px; }
input { appearance: none; width: 11px; height: 11px; margin: 3px 0 0; border: 1px solid #888; background: #fff; display: grid; place-items: center; }
input:checked { border-color: #333; }
input:checked::before { content: ""; width: 8px; height: 4px; border: solid #000; border-width: 0 0 2px 2px; transform: rotate(-45deg); margin-bottom: 2px; }
.note { color: #101080; padding: 2px 0 0 1px; }
.plain { color: #000; font-size: 11px; font-weight: normal; }
.red { color: #e81010; }
.strong { font-size: 12px; font-weight: bold; }
.selected td { background: #0a246a; color: #fff; border-top: 1px dotted #c8c080; border-bottom: 1px dotted #c8c080; padding-top: 2px; }
.selected .plain { color: #fff; }
.scroll { position: absolute; right: 0; top: 21px; bottom: 0; width: 18px; padding-right: 1px; display: flex; flex-direction: column; background: #ebe8e4; }
.step { height: 15px; flex: none; border: 1px solid #fff; border-right: 2px solid #555; border-bottom: 2px solid #555; display: grid; place-items: center; }
.track { flex: 1; display: flex; flex-direction: column; }
.track::before { content: ""; flex: 27; }
.track::after { content: ""; flex: 45; }
.thumb { flex: 28; background: #d4d0c8; border: 1px solid #fff; border-right: 2px solid #555; border-bottom: 2px solid #555; }

.status { flex: none; display: flex; gap: 3px; height: 23px; margin-top: 6px; padding-top: 7px; border-top: 2px solid #6e6a66; font-size: 13px; font-weight: bold; line-height: 15px; white-space: nowrap; overflow: hidden; color: #222; box-shadow: inset 0 5px 0 #d4d0c8, inset 0 6px 0 #fff; }
.key { padding: 1px 1px 0; }
.model { padding-left: 0; margin-left: -2px; width: 48px; }
.val { padding-left: 2px; border-top: 1px solid #777; border-left: 1px solid #777; border-right: 1px solid #fff; }
.v-model { width: 78px; }
.v-year { width: 191px; }
.v-group { width: 239px; }
.v-part { width: 40px; }
.v-filter { width: 34px; }
```
